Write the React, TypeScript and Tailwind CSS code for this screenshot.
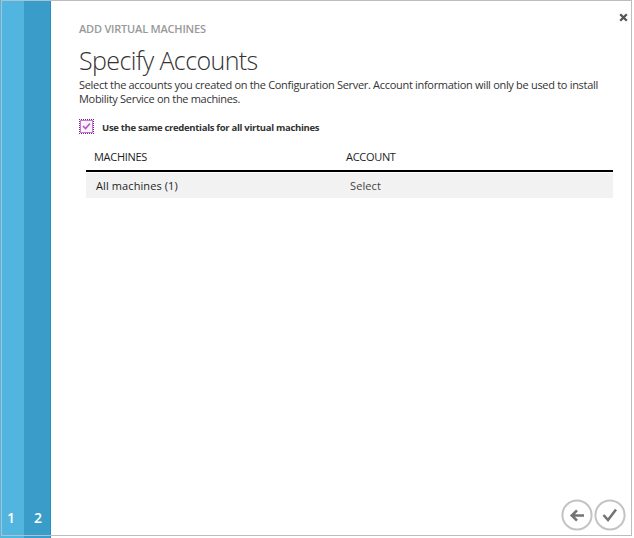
import React from "react";

const steps = [
  { n: "1", cls: "w-6 bg-[#52b5e0] pl-[7px]" },
  { n: "2", cls: "w-[27px] bg-[#3a9dc9] pl-[10px] border-r border-[#2492c2]" },
];

function Sidebar() {
  return (
    <nav className="relative flex h-full w-[51px] shrink-0">
      {steps.map((s) => (
        <div key={s.n} className={`flex items-end pb-[10px] text-[14px] leading-[20px] font-semibold text-white ${s.cls}`}>
          {s.n}
        </div>
      ))}
      <div className="absolute top-0 bottom-[2px] left-[1px] w-[50px] border-t border-b border-l border-[#a5c5d3]" />
    </nav>
  );
}

function Checkbox() {
  return (
    <svg width="15" height="15" viewBox="0 0 15 15" className="shrink-0" shapeRendering="crispEdges">
      <rect width="15" height="15" fill="#fff" />
      <path d="M0 0.5 H15 M0 14.5 H15 M0.5 0 V15 M14.5 0 V15" stroke="#6d2c78" strokeDasharray="1 1" />
      <rect x="1.5" y="1.5" width="12" height="12" fill="#fdf6fe" stroke="#d070e0" />
      <path d="M4 7 L6.5 9.5 L11 4.5" fill="none" stroke="#b950c8" strokeWidth="1.6" shapeRendering="auto" />
    </svg>
  );
}

function RoundButton({ label, d }: { label: string; d: string }) {
  return (
    <button aria-label={label} className="h-8 w-8">
      <svg width="32" height="32" viewBox="0 0 32 32" fill="none">
        <circle cx="16" cy="16" r="14.6" stroke="#c3c3c3" strokeWidth="2" />
        <path d={d} stroke="#747474" strokeWidth="2.6" />
      </svg>
    </button>
  );
}

export default function App() {
  return (
    <div className="flex h-[538px] w-[634px] overflow-hidden bg-white font-['Open_Sans','Noto_Sans',sans-serif] whitespace-nowrap text-[#333]">
      <Sidebar />
      <main className="relative flex h-[536px] w-[581px] flex-col border-t border-r border-b border-[#bdbdbd] pl-[28px]">
        <button aria-label="Close" className="absolute top-[12px] right-[3px]">
          <svg width="9" height="9" viewBox="0 0 9 9">
            <path d="M1.2 1.2 L7.8 7.8 M7.8 1.2 L1.2 7.8" stroke="#555" strokeWidth="2.3" />
          </svg>
        </button>
        <div className="mt-[19px] h-[18px] text-[11px] leading-[18px] font-semibold tracking-[-0.2px] text-[#999]">ADD VIRTUAL MACHINES</div>
        <h1 className="mt-[4px] h-[36px] text-[25px] leading-[36px] font-light tracking-[-0.6px]">Specify Accounts</h1>
        <p className="text-[11px] leading-[14px] tracking-[-0.305px]">
          Select the accounts you created on the Configuration Server. Account information will only be used to install
          <br />
          Mobility Service on the machines.
        </p>
        <label className="mt-[12px] flex h-[19px] items-start gap-2 pt-px text-[9.5px] leading-[17px] font-bold tracking-[-0.3px]">
          <Checkbox />
          Use the same credentials for all virtual machines
        </label>
        <section className="mt-[9px] ml-[7px] w-[527px] text-[11px] text-[#1e1e1e]">
          <div className="flex h-[26px] border-b-2 border-black pl-[8px] leading-[22px]">
            <div className="w-[252px] tracking-[-0.3px]">MACHINES</div>
            <div className="tracking-[-0.3px]">ACCOUNT</div>
          </div>
          <div className="mt-[1px] flex h-[25px] bg-[#f2f2f2] pl-[10px] leading-[26px]">
            <div className="w-[254px] tracking-[0.1px]">All machines (1)</div>
            <div className="tracking-[0.1px] text-[#444]">Select</div>
          </div>
        </section>
        <div className="mt-auto mb-[4px] flex justify-end gap-px pr-[5px]">
          <RoundButton label="Back" d="M23 16.5 H11 M16 11.3 L10.8 16.5 L16 21.7" />
          <RoundButton label="Finish" d="M9.5 16 L14 21 L22 10.5" />
        </div>
      </main>
    </div>
  );
}
